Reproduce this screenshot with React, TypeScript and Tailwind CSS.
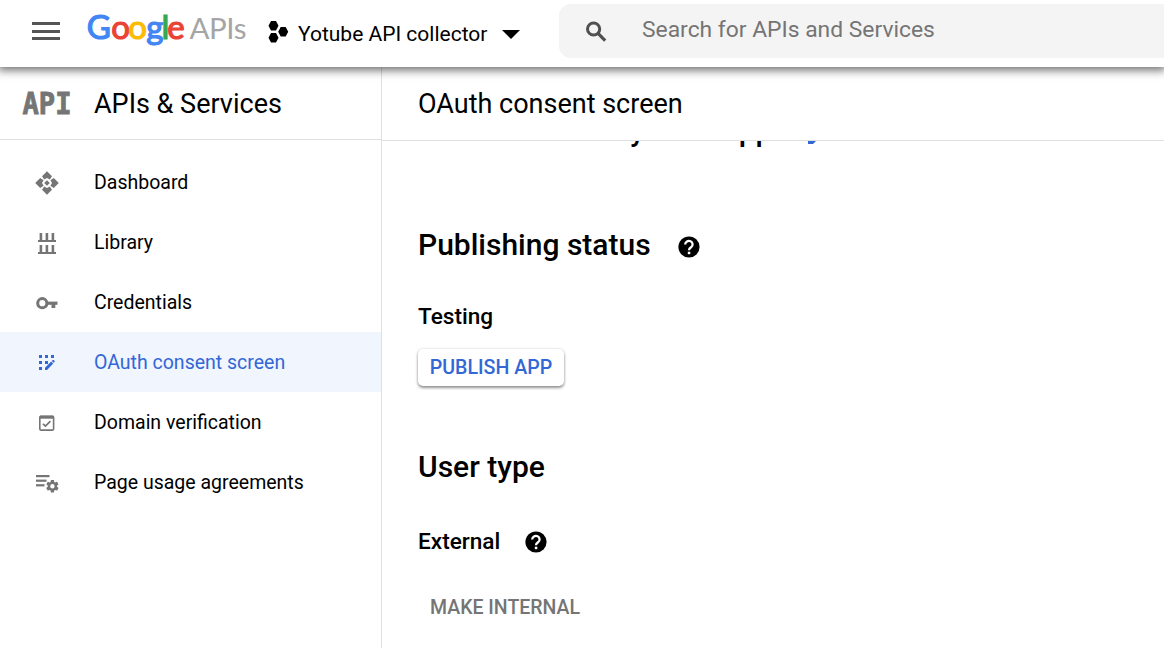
import type { ReactNode } from "react";
import { MdEdit } from "react-icons/md";

const letters: [string, number, string][] = [
  ["G", 86.8, "#4285f4"],
  ["o", 111.2, "#ea4335"],
  ["o", 128.2, "#fbbc05"],
  ["g", 146.3, "#4285f4"],
  ["l", 161.5, "#34a853"],
  ["e", 167.3, "#ea4335"],
];

function Logo() {
  return (
    <svg className="h-[50px] w-[164px] shrink-0" viewBox="86 0 164 50" fontFamily="Lato, sans-serif">
      {letters.map(([c, x, fill], i) => (
        <text key={i} x={x} y="38.8" fontSize="33" fill={fill} stroke={fill} strokeWidth="1.2">
          {c}
        </text>
      ))}
      <text x="189.5" y="38.6" fontSize="29.5" fill="#a5a5a5" textLength="57">
        APIs
      </text>
    </svg>
  );
}

function SearchIcon() {
  return (
    <svg className="ml-[26px] mt-px h-[22px] w-[22px]" viewBox="0 0 22 22" fill="none" stroke="#505050">
      <circle cx="8.6" cy="8" r="6.1" strokeWidth="3" />
      <path d="M13 12.4l7.2 7.2" strokeWidth="3.2" />
    </svg>
  );
}

function HelpIcon({ className }: { className: string }) {
  return (
    <svg className={className} viewBox="0 0 22 22" fill="none">
      <circle cx="11" cy="11" r="10.6" fill="#000" />
      <path d="M7.2 8.4a3.7 3.5 0 1 1 5.9 2.8c-1.3.9-2.1 1.4-2.1 3" stroke="#fff" strokeWidth="2.3" />
      <rect x="9.8" y="15.7" width="2.5" height="2.5" fill="#fff" />
    </svg>
  );
}

function DashboardIcon() {
  return (
    <svg className="size-[26px]" viewBox="0 0 26 26" fill="#757575">
      {[0, 90, 180, 270].map((a) => (
        <path key={a} transform={`rotate(${a} 13 13)`} d="M13 1.2l5 5-2.2 3.4-2.8-1.6-2.8 1.6-2.2-3.4z" />
      ))}
      <path d="M13 10.2l2.8 2.8-2.8 2.8-2.8-2.8z" />
    </svg>
  );
}

function LibraryIcon() {
  return (
    <svg className="size-6" viewBox="0 0 24 24" fill="#757575">
      {[2, 14].map((y) => (
        <g key={y}>
          <rect x="4.6" y={y} width="2.6" height="8" />
          <rect x="10.6" y={y} width="2.6" height="8" />
          <rect x="16.6" y={y} width="2.6" height="8" />
          <rect x="3" y={y + 7} width="18" height="2" />
        </g>
      ))}
    </svg>
  );
}

function KeyIcon() {
  return (
    <svg className="h-6 w-[22px]" viewBox="0 0 22 24" fill="none" stroke="#757575">
      <circle cx="6.3" cy="12.2" r="4.6" strokeWidth="3" />
      <path d="M11 12.2h10.5" strokeWidth="3.2" />
      <path d="M17.4 12v5" strokeWidth="3.8" />
    </svg>
  );
}

function ConsentIcon() {
  return (
    <svg className="size-6" viewBox="0 0 24 24" fill="#3367d6">
      <rect x="4" y="4" width="3" height="3" />
      <rect x="10" y="4" width="3" height="3" />
      <rect x="16" y="4" width="3" height="3" />
      <rect x="4" y="10" width="3" height="3" />
      <rect x="10" y="10" width="3" height="3" />
      <rect x="4" y="16" width="3" height="3" />
      <path d="M10 19v-2.2l6.2-6.2 2 2-6.1 6.4zM16.8 10l1-.9q.5-.4 1 0l.7.8q.5.5 0 1l-.9.9z" />
    </svg>
  );
}

function DomainIcon() {
  return (
    <svg className="size-6" viewBox="0 0 24 24" fill="none" stroke="#757575">
      <rect x="4.8" y="5.3" width="13.8" height="13.8" rx="1" strokeWidth="1.6" />
      <path d="M5 6.2h13.6" strokeWidth="3" />
      <path d="M8 12.8l2.5 2.3 4.9-4.9" strokeWidth="1.7" />
    </svg>
  );
}

function AgreementsIcon() {
  return (
    <svg className="size-6" viewBox="0 0 24 24" fill="#757575">
      <rect x="1" y="4" width="13.5" height="2.2" />
      <rect x="1" y="8.6" width="10.5" height="2.2" />
      <rect x="1" y="13.2" width="8.5" height="2.2" />
      <g transform="translate(9.6 7.4) scale(.65)">
        <path d="M19.14 12.94c.04-.3.06-.61.06-.94 0-.32-.02-.64-.07-.94l2.03-1.58a.49.49 0 0 0 .12-.61l-1.92-3.32a.49.49 0 0 0-.59-.22l-2.39.96a7 7 0 0 0-1.62-.94l-.36-2.54a.48.48 0 0 0-.48-.41h-3.84a.47.47 0 0 0-.47.41l-.36 2.54c-.59.24-1.13.57-1.62.94l-2.39-.96a.48.48 0 0 0-.59.22L2.74 8.87a.47.47 0 0 0 .12.61l2.03 1.58a6 6 0 0 0-.02 1.88l-2.03 1.58a.49.49 0 0 0-.12.61l1.92 3.32c.12.22.37.29.59.22l2.39-.96c.5.38 1.03.7 1.62.94l.36 2.54c.05.24.24.41.48.41h3.84c.24 0 .44-.17.47-.41l.36-2.54a7 7 0 0 0 1.62-.94l2.39.96c.22.08.47 0 .59-.22l1.92-3.32a.47.47 0 0 0-.12-.61zM12 15.4a3.4 3.4 0 1 1 0-6.8 3.4 3.4 0 0 1 0 6.8z" />
      </g>
    </svg>
  );
}

const items: { label: string; icon: ReactNode; active?: boolean }[] = [
  { label: "Dashboard", icon: <DashboardIcon /> },
  { label: "Library", icon: <LibraryIcon /> },
  { label: "Credentials", icon: <KeyIcon /> },
  { label: "OAuth consent screen", icon: <ConsentIcon />, active: true },
  { label: "Domain verification", icon: <DomainIcon /> },
  { label: "Page usage agreements", icon: <AgreementsIcon /> },
];

export default function App() {
  return (
    <div className="flex h-[648px] w-[1164px] flex-col overflow-hidden bg-white font-['Roboto',sans-serif] text-black">
      <header className="z-10 flex h-[67px] shrink-0 bg-white shadow-[0_1px_9px_2px_rgba(0,0,0,0.6)]">
        <button className="ml-8 mt-[22px] flex h-[18px] w-7 shrink-0 flex-col justify-between" aria-label="Menu">
          <span className="h-[3px] w-full bg-[#555]" />
          <span className="h-[3px] w-full bg-[#555]" />
          <span className="h-[3px] w-full bg-[#555]" />
        </button>
        <div className="ml-[26px] flex">
          <Logo />
        </div>
        <div className="ml-[18px] flex h-[67px] w-[291px] shrink-0 items-center">
          <svg className="mb-1 h-[22px] w-[21px]" viewBox="0 0 21 22">
            <path d="M3 0h5l2.5 4.7L8 9.4H3L.5 4.7zM3 12h5l2.5 4.7L8 21.4H3L.5 16.7zM12.7 6h5l2.5 4.7-2.5 4.7h-5l-2.5-4.7z" />
          </svg>
          <span className="ml-[9px] mt-[2px] whitespace-nowrap text-[21px]">Yotube API collector</span>
          <svg className="ml-[15px] mt-px h-[9px] w-[18px]" viewBox="0 0 18 9">
            <path d="M0 0h18L9 9z" />
          </svg>
        </div>
        <div className="mt-1 flex h-[54px] flex-1 items-center rounded-l-xl bg-[#f4f4f4]">
          <SearchIcon />
          <span className="mb-[3px] ml-[35px] whitespace-nowrap text-[22.85px] leading-[34px] text-[#757575]">
            Search for APIs and Services
          </span>
        </div>
      </header>
      <div className="flex flex-1 overflow-hidden">
        <aside className="w-[382px] shrink-0 border-r border-[#e0e0e0]">
          <div className="flex h-[73px] items-center border-b border-[#e0e0e0]">
            <svg className="ml-[22px] h-8 w-[50px] overflow-visible" viewBox="22 0 50 32">
              <text x="22.5" y="27.3" fontFamily="DejaVu Sans Mono, monospace" fontWeight="700" fontSize="31" textLength="49" lengthAdjust="spacingAndGlyphs" fill="#757575" stroke="#757575" strokeWidth="0.9">
                API
              </text>
            </svg>
            <h2 className="ml-[22px] mt-px whitespace-nowrap text-[27px] leading-8">APIs &amp; Services</h2>
          </div>
          <nav className="pt-3">
            {items.map((item) => (
              <a
                key={item.label}
                className={item.active ? "flex h-[60px] items-center bg-[#f0f5fe] text-[#3367d6]" : "flex h-[60px] items-center"}
              >
                <span className="flex w-[94px] justify-center pr-px pt-px">{item.icon}</span>
                <span className="whitespace-nowrap pt-px text-[19.5px] leading-[30px]">{item.label}</span>
              </a>
            ))}
          </nav>
        </aside>
        <main className="flex flex-1 flex-col">
          <div className="flex h-[74px] shrink-0 items-center border-b border-[#e0e0e0] pl-9">
            <h1 className="text-[27px] leading-8">OAuth consent screen</h1>
          </div>
          <section className="flex flex-1 flex-col items-start overflow-hidden pl-9">
            <div className="-mt-[30px] flex h-10 items-center text-[30px] font-medium leading-10">
              <span className="ml-[212px]">y</span>
              <span className="ml-[94px]">pp</span>
              <MdEdit className="ml-8 mt-px size-8 text-[#3367d6]" />
            </div>
            <div className="mt-[73px] flex h-10 items-center">
              <h2 className="text-[30px] font-medium">Publishing status</h2>
              <HelpIcon className="ml-[27px] mt-[6px] size-[22px]" />
            </div>
            <h3 className="mt-9 text-[22.6px] font-medium leading-[34px]">Testing</h3>
            <button className="mt-[15px] h-[37px] w-[146px] whitespace-nowrap rounded-[5px] bg-white pt-px text-[19.6px] font-medium text-[#3367d6] shadow-[0_2px_3px_rgba(0,0,0,0.4),0_0_3px_rgba(0,0,0,0.15)]">
              PUBLISH APP
            </button>
            <h2 className="mt-[61px] text-[30px] font-medium leading-10">User type</h2>
            <div className="mt-[37px] flex h-[34px] items-center">
              <h3 className="pt-[2px] text-[22.6px] font-medium leading-[34px]">External</h3>
              <HelpIcon className="ml-[24.5px] mt-px size-[22px]" />
            </div>
            <button className="ml-3 mt-8 h-9 text-[19.5px] font-medium text-[#757575]">MAKE INTERNAL</button>
          </section>
        </main>
      </div>
    </div>
  );
}
